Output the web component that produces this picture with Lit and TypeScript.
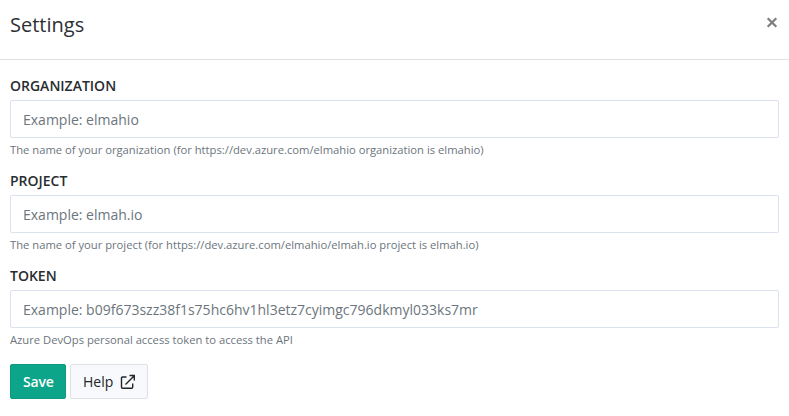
import { LitElement, html, css } from "lit";
import { customElement } from "lit/decorators.js";

const fields = [
  {
    id: "organization",
    label: "Organization",
    placeholder: "Example: elmahio",
    hint: "The name of your organization (for https://dev.azure.com/elmahio organization is elmahio)",
  },
  {
    id: "project",
    label: "Project",
    placeholder: "Example: elmah.io",
    hint: "The name of your project (for https://dev.azure.com/elmahio/elmah.io project is elmah.io)",
  },
  {
    id: "token",
    label: "Token",
    placeholder: "Example: b09f673szz38f1s75hc6hv1hl3etz7cyimgc796dkmyl033ks7mr",
    hint: "Azure DevOps personal access token to access the API",
  },
];

@customElement("app-root")
export class AppRoot extends LitElement {
  static styles = css`
    :host {
      display: block;
      height: 416px;
      overflow: hidden;
      background: #fff;
      color: #212529;
      font-family: "Open Sans", "Noto Sans", sans-serif;
      font-size: 14px;
    }
    * {
      box-sizing: border-box;
    }
    .header {
      display: flex;
      justify-content: space-between;
      height: 60px;
      padding: 10px 10px 0;
      border-bottom: 1px solid #dee2e6;
    }
    .title {
      margin: 0;
      color: #2c3034;
      font-size: 20px;
      font-weight: 400;
      line-height: 30px;
    }
    .close {
      display: flex;
      align-items: center;
      height: 25px;
      margin-right: 1px;
      padding: 0;
      border: 0;
      background: none;
      color: #7f7f7f;
    }
    .close svg {
      width: 12px;
      height: 12px;
    }
    .body {
      padding: 15px 10px 0;
    }
    .field {
      height: 95px;
    }
    .label {
      display: block;
      height: 25px;
      color: #292d31;
      line-height: 21px;
      font-weight: 600;
      text-transform: uppercase;
    }
    .input {
      display: block;
      width: 100%;
      height: 38px;
      padding: 0 12px;
      border: 1px solid #dce1ef;
      border-radius: 2px;
      background: #fff;
      font: 400 14px/21px "Open Sans", sans-serif;
      outline: none;
    }
    .input::placeholder {
      color: #6c757d;
      opacity: 1;
    }
    .hint {
      display: block;
      margin-top: 3px;
      color: #6c757d;
      font-size: 11.22px;
      line-height: 17px;
    }
    .actions {
      display: flex;
      gap: 4px;
      padding-top: 4px;
    }
    .button {
      display: flex;
      align-items: center;
      height: 35px;
      padding: 0 12px;
      border: 1px solid #dee2e6;
      border-radius: 2px;
      background: #f8f9fc;
      color: #212529;
      font: 400 14px/21px "Open Sans", sans-serif;
    }
    .primary {
      width: 56px;
      border-color: #0c9a80;
      background: #0da58a;
      color: #fff;
      font-weight: 600;
      letter-spacing: -0.15px;
    }
    .help {
      width: 78px;
    }
    .icon {
      flex: none;
      width: 16px;
      height: 16px;
      margin-left: 7px;
    }
  `;

  render() {
    return html`
      <header class="header">
        <h1 class="title">Settings</h1>
        <button class="close" aria-label="Close">
          <svg viewBox="0 0 12 12" fill="none" stroke="currentColor" stroke-width="2.3">
            <path d="M1.7 1.3L10.3 9.7M10.3 1.3L1.7 9.7" />
          </svg>
        </button>
      </header>
      <main class="body">
        ${fields.map(
          (f) => html`
            <div class="field">
              <label class="label" for=${f.id}>${f.label}</label>
              <input class="input" id=${f.id} placeholder=${f.placeholder} />
              <small class="hint">${f.hint}</small>
            </div>
          `,
        )}
        <div class="actions">
          <button class="button primary">Save</button>
          <button class="button help">
            Help
            <svg class="icon" viewBox="0 0 16 16" fill="none" stroke="currentColor" stroke-width="1.4">
              <path d="M6.5 3H2.5Q1.5 3 1.5 4V13.3Q1.5 14.3 2.5 14.3H11.7Q12.7 14.3 12.7 13.3V9.5M5.5 10.5L14 2M9.5 1.5H14.3V6.5" />
            </svg>
          </button>
        </div>
      </main>
    `;
  }
}
